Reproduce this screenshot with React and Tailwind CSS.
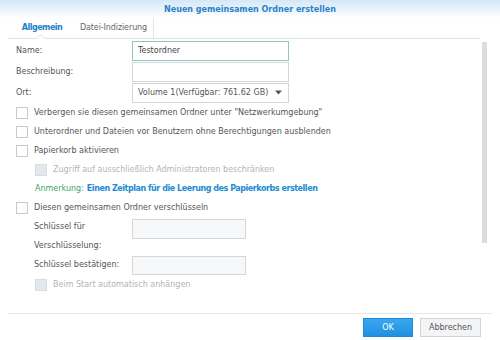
import React from 'react';

const font = { fontFamily: '"DejaVu Sans", Verdana, sans-serif' };

const Checkbox = ({ disabled }) => (
    <span
        className={`inline-block w-[12px] h-[12px] border shrink-0 ${disabled ? 'bg-[#e3e7ee] border-[#d9dde4]' : 'bg-white border-[#c9c9c9]'}`}
    />
);

const CheckRow = ({ label, disabled, indent }) => (
    <div className={`flex items-center h-[19px] gap-[6px] ${indent ? 'pl-[19px]' : ''}`}>
        <Checkbox disabled={disabled} />
        <span className={disabled ? 'text-[#b4b4b4]' : 'text-[#555]'}>{label}</span>
    </div>
);

const Input = ({ value, w = 'w-[157px]', h = 'h-[20px]', active, dim }) => (
    <div
        className={`${w} ${h} border flex items-center px-[5px] ${active ? 'border-[#8cc6c8]' : 'border-[#d6d6d6]'} ${dim ? 'bg-[#f7f8f9]' : 'bg-white'}`}
    >
        {value}
    </div>
);

export default function App() {
    return (
        <div className="w-[500px] h-[340px] bg-white flex flex-col text-[8px] text-[#555] overflow-hidden" style={font}>
            {/* Title */}
            <div className="h-[18px] bg-gradient-to-b from-[#d4e7f7] to-white flex items-center justify-center">
                <span className="font-bold text-[#2a82c8] pt-[1px]">Neuen gemeinsamen Ordner erstellen</span>
            </div>

            {/* Tabs */}
            <div className="relative h-[21px] ml-[8px] mr-[20px] border-b border-[#e2e2e2] flex items-stretch">
                <div className="w-[64px] flex items-center justify-center pl-[4px] font-bold text-[#2382c6] tracking-[-0.5px]">Allgemein</div>
                <div className="w-[82px] flex items-center justify-center pl-[2px] border-r border-[#e4e4e4] text-[#666] tracking-[-0.1px]">Datei-Indizierung</div>
                <svg className="absolute left-[28px] -bottom-[1px]" width="9" height="5" viewBox="0 0 9 5">
                    <path d="M0 4.5 L4.5 0.5 L9 4.5" fill="white" stroke="#e2e2e2" strokeWidth="1" />
                    <rect x="0" y="4.5" width="9" height="1" fill="white" />
                </svg>
            </div>

            {/* Body */}
            <div className="flex flex-1">
                <div className="flex-1 pl-[16px] pt-[1px]">
                    <div className="flex items-center h-[21px]">
                        <span className="w-[116px]">Name:</span>
                        <Input value={<span className="text-[#444]">Testordner</span>} active />
                    </div>
                    <div className="flex items-center h-[21px]">
                        <span className="w-[116px]">Beschreibung:</span>
                        <Input />
                    </div>
                    <div className="flex items-center h-[21px]">
                        <span className="w-[116px]">Ort:</span>
                        <div className="w-[157px] h-[20px] border border-[#d6d6d6] flex items-center justify-between px-[5px]">
                            <span className="text-[#555]">Volume 1(Verfügbar: 761.62 GB)</span>
                            <svg width="7" height="5" viewBox="0 0 7 5" className="mr-[1px]">
                                <path d="M0 0.5 L7 0.5 L3.5 4.5 Z" fill="#555" />
                            </svg>
                        </div>
                    </div>

                    <CheckRow label={'Verbergen sie diesen gemeinsamen Ordner unter "Netzwerkumgebung"'} />
                    <CheckRow label="Unterordner und Dateien vor Benutzern ohne Berechtigungen ausblenden" />
                    <CheckRow label="Papierkorb aktivieren" />
                    <CheckRow label="Zugriff auf ausschließlich Administratoren beschränken" disabled indent />
                    <div className="flex items-center h-[19px] pl-[19px]">
                        <span className="text-[#3aa56e]">Anmerkung:</span>
                        <span className="ml-[3px] font-bold text-[#1c8bd2] tracking-[-0.45px]">Einen Zeitplan für die Leerung des Papierkorbs erstellen</span>
                    </div>
                    <CheckRow label="Diesen gemeinsamen Ordner verschlüsseln" />

                    <div className="flex h-[38px] pl-[18px]">
                        <div className="w-[98px] flex flex-col">
                            <span className="h-[19px] flex items-center">Schlüssel für</span>
                            <span className="h-[19px] flex items-center">Verschlüsselung:</span>
                        </div>
                        <div className="pt-[2px]">
                            <Input w="w-[114px]" dim />
                        </div>
                    </div>
                    <div className="flex items-center h-[20px] pl-[18px]">
                        <span className="w-[98px]">Schlüssel bestätigen:</span>
                        <Input w="w-[114px]" h="h-[19px]" dim />
                    </div>
                    <CheckRow label="Beim Start automatisch anhängen" disabled indent />
                </div>

                {/* Scrollbar */}
                <div className="w-[18px] pt-[3px]">
                    <div className="w-[5px] h-[201px] bg-[#dcdcdc]" />
                </div>
            </div>

            {/* Footer */}
            <div className="mx-[8px] mb-[3px] border-t border-[#e6e6e6] h-[24px] flex items-end justify-end gap-[7px] pr-[11px]">
                <button className="w-[50px] h-[19px] bg-gradient-to-b from-[#3aa8f0] to-[#1e8fe0] text-white border border-[#2289d8]" style={font}>
                    <span className="text-[8px]">OK</span>
                </button>
                <button className="w-[61px] h-[19px] bg-[#f3f4f6] border border-[#d0d3d8] text-[#555]" style={font}>
                    <span className="text-[8px]">Abbrechen</span>
                </button>
            </div>
        </div>
    );
}
